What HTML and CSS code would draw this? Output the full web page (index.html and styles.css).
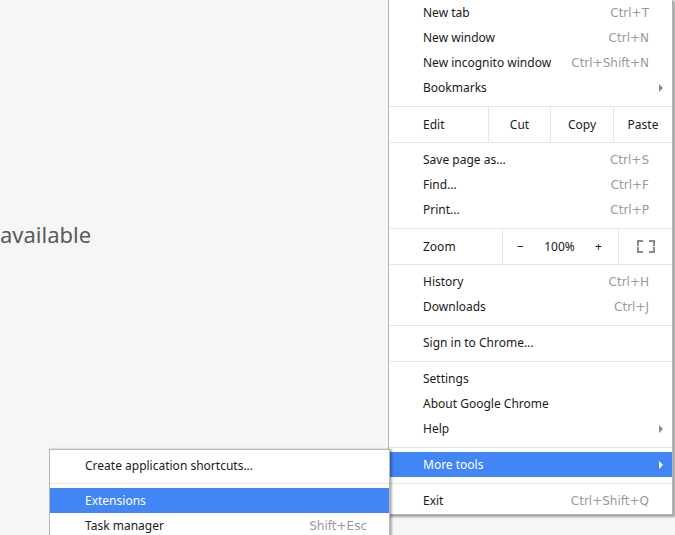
FILE: index.html
```html
<!DOCTYPE html>
<html>
<head>
<meta charset="utf-8">
<link rel="stylesheet" href="styles.css">
</head>
<body>
<div class="page">
  <p class="msg">available</p>
</div>

<div class="menu main">
  <div class="item"><span>New tab</span><span class="key">Ctrl+T</span></div>
  <div class="item"><span>New window</span><span class="key">Ctrl+N</span></div>
  <div class="item"><span>New incognito window</span><span class="key">Ctrl+Shift+N</span></div>
  <div class="item sub-item"><span>Bookmarks</span><span class="arrow"></span></div>
  <div class="edit-row">
    <span class="label">Edit</span>
    <span class="cell">Cut</span>
    <span class="cell">Copy</span>
    <span class="cell">Paste</span>
  </div>
  <div class="item"><span>Save page as...</span><span class="key">Ctrl+S</span></div>
  <div class="item"><span>Find...</span><span class="key">Ctrl+F</span></div>
  <div class="item"><span>Print...</span><span class="key">Ctrl+P</span></div>
  <div class="zoom-row">
    <span class="label">Zoom</span>
    <span class="zoom-ctl"><span>−</span><span>100%</span><span>+</span></span>
    <span class="cell full">
      <svg width="18" height="13" viewBox="0 0 18 13">
        <path d="M1 5V1H5M13 1H17V5M17 8V12H13M5 12H1V8" fill="none" stroke="#8a8a8a" stroke-width="2" stroke-linecap="square"/>
      </svg>
    </span>
  </div>
  <div class="item"><span>History</span><span class="key">Ctrl+H</span></div>
  <div class="item"><span>Downloads</span><span class="key">Ctrl+J</span></div>
  <div class="sep"></div>
  <div class="item"><span>Sign in to Chrome...</span></div>
  <div class="sep"></div>
  <div class="item"><span>Settings</span></div>
  <div class="item"><span>About Google Chrome</span></div>
  <div class="item sub-item"><span>Help</span><span class="arrow"></span></div>
  <div class="sep"></div>
  <div class="item sub-item active"><span>More tools</span><span class="arrow"></span></div>
  <div class="sep"></div>
  <div class="item"><span>Exit</span><span class="key">Ctrl+Shift+Q</span></div>
</div>

<div class="menu submenu">
  <div class="item"><span>Create application shortcuts...</span></div>
  <div class="sep sub-sep"></div>
  <div class="item active"><span>Extensions</span></div>
  <div class="item"><span>Task manager</span><span class="key">Shift+Esc</span></div>
</div>
</body>
</html>
```

FILE: styles.css
```css
html, body {
  margin: 0;
  padding: 0;
}
body {
  width: 675px;
  height: 535px;
  overflow: hidden;
  background: #f6f6f6;
  font-family: "Noto Sans", "Open Sans", sans-serif;
  font-size: 12px;
  color: #1a1a1a;
  position: relative;
}
.page {
  padding-top: 218px;
}
.msg {
  margin: 0;
  font-size: 22px;
  line-height: 32px;
  color: #5a5a5a;
}

.menu {
  position: absolute;
  background: #fff;
  border: 1px solid #b5b5b5;
  box-shadow: 2px 2px 2px rgba(0, 0, 0, 0.35);
  box-sizing: border-box;
}
.main {
  left: 388px;
  top: -1px;
  width: 285px;
  padding-bottom: 1px;
  z-index: 1;
}
.submenu {
  left: 49px;
  top: 449px;
  width: 341px;
  height: 110px;
  padding-top: 3px;
  z-index: 2;
  box-shadow: 2px 0 2px rgba(0, 0, 0, 0.3);
}

.item {
  height: 25px;
  display: flex;
  align-items: center;
  justify-content: space-between;
  padding: 0 23px 0 34px;
  white-space: nowrap;
}
.submenu .item {
  padding: 0 22px 0 35px;
}
.key {
  color: #9a9a9a;
  font-family: "DejaVu Sans", "Noto Sans", sans-serif;
  font-size: 12px;
}
.sub-item {
  padding-right: 9px;
}
.arrow {
  width: 0;
  height: 0;
  border-top: 4px solid transparent;
  border-bottom: 4px solid transparent;
  border-left: 4px solid #8a8a8a;
}
.active {
  background: #4285f4;
  color: #fff;
}
.active .arrow {
  border-left-color: #fff;
}

.sep {
  height: 1px;
  background: #e6e6e6;
  margin: 6px 0 4px;
}
.sub-sep {
  margin: 5px 0 4px;
}

.edit-row,
.zoom-row {
  display: grid;
  height: 35px;
  border-top: 1px solid #e6e6e6;
  border-bottom: 1px solid #e6e6e6;
  margin: 6px 0 4px;
  align-items: stretch;
}
.edit-row {
  grid-template-columns: 1fr 62px 63px 59px;
}
.zoom-row {
  grid-template-columns: 1fr 116px 54px;
}
.label {
  display: flex;
  align-items: center;
  padding-left: 34px;
}
.cell {
  display: flex;
  align-items: center;
  justify-content: center;
  border-left: 1px solid #e6e6e6;
}
.zoom-ctl {
  display: flex;
  align-items: center;
  justify-content: space-between;
  padding: 0 16px 0 14px;
  border-left: 1px solid #e6e6e6;
}
.full svg {
  display: block;
}
```
